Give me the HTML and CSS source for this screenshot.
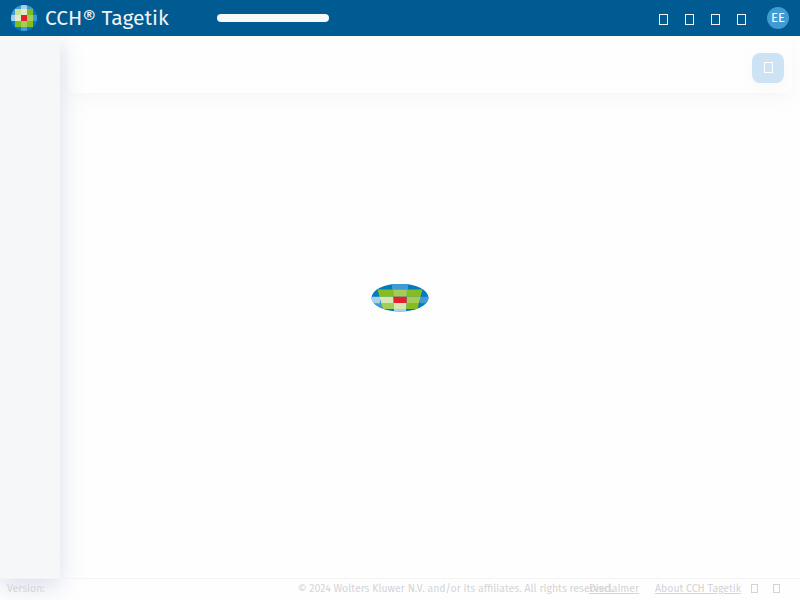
FILE: index.html
```
<!DOCTYPE html>
<html lang="en">
<head>
<meta charset="utf-8">
<title>CCH Tagetik</title>
<link rel="stylesheet" href="styles.css">
</head>
<body>
<header class="topbar">
  <svg class="logo" viewBox="0 0 26 26" aria-hidden="true">
    <defs><clipPath id="disc"><circle cx="13" cy="13" r="13"/></clipPath></defs>
    <g clip-path="url(#disc)">
      <path fill="#007ac3" d="M0 0h26v26H0z"/>
      <path fill="#409bd2" d="M4 0h6v4H4zM16 0h6v4h-6zM0 4h4v6H0zM22 10h4v6h-4zM10 22h6v4h-6z"/>
      <path fill="#a6d1ea" d="M10 0h6v4h-6zM0 10h4v6H0z"/>
      <path fill="#85bc20" d="M16 4h6v6h-6zM4 16h6v6H4zM16 16h6v6h-6z"/>
      <path fill="#a4cd58" d="M16 10h6v6h-6zM10 16h6v6h-6z"/>
      <path fill="#c9e29b" d="M4 4h6v6H4z"/>
      <path fill="#dfedc6" d="M10 4h6v6h-6zM4 10h6v6H4z"/>
      <path fill="#e5202e" d="M10 10h6v6h-6z"/>
    </g>
  </svg>
  <h1 class="product">CCH® Tagetik</h1>
  <div class="placeholder"></div>
  <nav class="tools"><i class="glyph"></i><i class="glyph"></i><i class="glyph"></i><i class="glyph"></i></nav>
  <div class="avatar">EE</div>
</header>
<div class="workspace">
  <aside class="sidebar"></aside>
  <main class="content">
    <div class="toolbar"><button class="action" aria-label="Action"><i class="glyph"></i></button></div>
    <div class="stage">
      <svg class="loader" viewBox="0 0 58 28" aria-hidden="true">
        <defs><clipPath id="oval"><ellipse cx="29" cy="13.700" rx="28.500" ry="13.900"/></clipPath></defs>
        <g clip-path="url(#oval)">
          <path fill="#007ac3" d="M0 0h58v28H0z"/>
          <path fill="#409bd2" d="M21 0h16v5.500H21zM49 12.700h9v6.500h-9zM0 19h10.500l2 9H0z"/>
          <path fill="#a6d1ea" d="M0 12.700h9v6.500H0zM23 25h12v3H23z"/>
          <path fill="#85bc20" d="M6.500 5.500H22v7.200H8.500zM36 5.500h15.500l-2 7.200H35.700zM35.500 19H48l-1.500 6H35z"/>
          <path fill="#a4cd58" d="M22 5.500h14l-.3 7.200H22.400zM35.700 12.700h13.800L48 19H35.500zM10 19h13v6H12z"/>
          <path fill="#d4e8b0" d="M8.500 12.700h14V19H10zM23 19h12.500l-.5 6H23z"/>
          <path fill="#e5202e" d="M22.400 12.700h13.300l-.2 6.300H23z"/>
        </g>
      </svg>
    </div>
  </main>
</div>
<footer class="footer">
  <span class="version">Version:</span>
  <span class="copyright">© 2024 Wolters Kluwer N.V. and/or its affiliates. All rights reserved.</span>
  <a class="disclaimer">Disclaimer</a>
  <a class="about">About CCH Tagetik</a>
  <i class="glyph"></i><i class="glyph"></i>
</footer>
</body>
</html>
```
FILE: styles.css
```
* { box-sizing: border-box; }
body { margin: 0; height: 600px; overflow: hidden; display: flex; flex-direction: column; background: #fefefe; font-family: "Fira Sans", "Noto Sans", sans-serif; }
.topbar { height: 36px; flex: none; display: flex; align-items: center; padding: 0 11px; background: #005b92; color: #f0f2f4; position: relative; z-index: 3; }
.logo { width: 26px; height: 26px; flex: none; }
.product { margin: 0 0 0 8px; width: 172px; font-size: 21px; line-height: 36px; font-weight: 400; white-space: nowrap; }
.placeholder { width: 112px; height: 8px; border-radius: 4px; background: #f6f8fa; }
.tools { display: flex; gap: 17px; margin: 3px 21px 0 auto; }
.glyph { display: block; width: 9px; height: 11px; border: 1px solid currentColor; flex: none; }
.avatar { width: 22px; height: 22px; border-radius: 50%; background: #409bd5; color: #fff; font-size: 13px; line-height: 22px; text-align: center; }
.workspace { flex: 1; display: flex; min-height: 0; }
.sidebar { width: 60px; background: #f5f7f9; box-shadow: 0 8px 24px rgba(130, 145, 190, .3); position: relative; z-index: 2; }
.content { flex: 1; display: flex; flex-direction: column; }
.toolbar { height: 57px; flex: none; margin: 0 8px; padding: 17px 8px 0 0; display: flex; justify-content: flex-end; align-items: flex-start; border-radius: 0 0 8px 8px; box-shadow: 0 6px 18px rgba(150, 160, 190, .07); background: #fefefe; }
.action { width: 32px; height: 30px; padding: 0 0 1px 1px; border: 0; border-radius: 8px; background: #cce3f4; color: #fff; display: flex; align-items: center; justify-content: center; box-shadow: 0 4px 16px rgba(150, 160, 190, .08); }
.stage { flex: 1; display: flex; justify-content: center; padding: 191px 60px 0 0; }
.loader { width: 58px; height: 28px; }
.footer { height: 22px; flex: none; display: flex; align-items: center; padding: 0 20px 2px 7px; border-top: 1px solid #f3f3f5; color: #d4d4d6; font-size: 10.5px; white-space: nowrap; position: relative; z-index: 3; }
.version { width: 291px; }
.copyright { width: 291px; }
.disclaimer { width: 66px; text-decoration: underline; }
.about { width: 96px; text-decoration: underline; }
.footer .glyph { width: 7px; height: 9px; }
.footer .glyph + .glyph { margin-left: auto; }
```
